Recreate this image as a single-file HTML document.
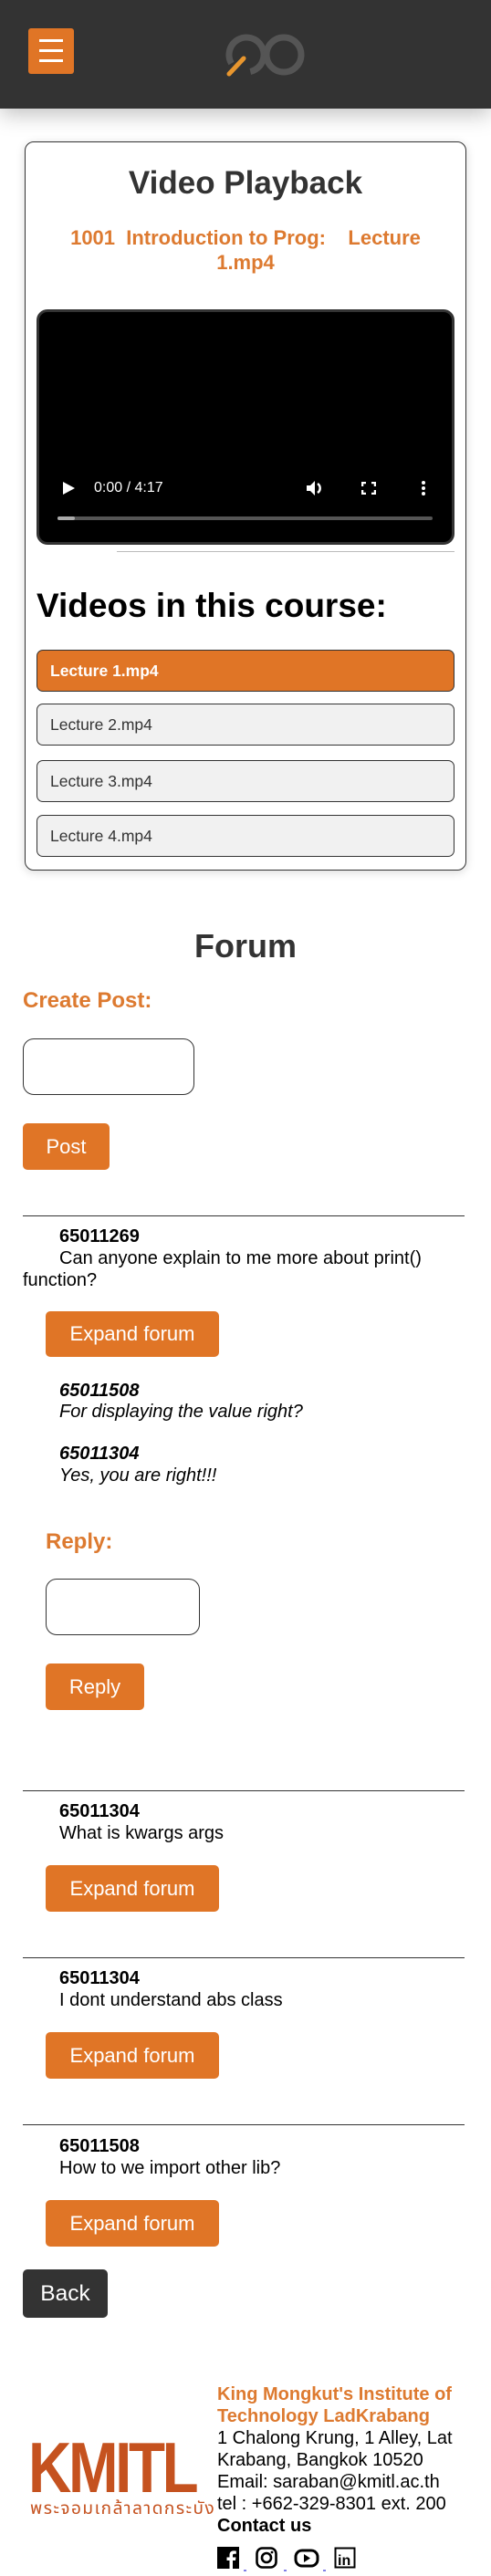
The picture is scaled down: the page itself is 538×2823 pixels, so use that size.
<!DOCTYPE html>
<html><head><meta charset="utf-8"><style>
*{margin:0;padding:0;box-sizing:border-box}
body{width:538px;height:2823px;position:relative;background:#fff;font-family:"Liberation Sans",Arial,sans-serif;overflow:hidden;color:#000}
.a{position:absolute;white-space:nowrap}
.hdr{position:absolute;left:0;top:0;width:538px;height:119px;background:#333;box-shadow:0 6px 22px rgba(0,0,0,.25)}
.btn{position:absolute;background:#e07526;color:#fff;border-radius:5px;text-align:center;font-size:22px}
.hr{position:absolute;left:25px;width:484px;height:1px;background:#333}
.id{font-size:20px;font-weight:bold;line-height:24px}
.tx{font-size:20px;line-height:24px}
.it{font-style:italic}
.item{position:absolute;left:40px;width:458px;height:46px;border:1px solid #333;border-radius:7px;background:#f1f1f1;font-size:17.5px;line-height:44px;padding-left:14px;color:#333}
.inp{position:absolute;border:1px solid #333;border-radius:12px;background:#fff}
.or{color:#dd7a30;font-weight:bold}
</style></head><body>
<div class="hdr"></div>
<div class="a" style="left:31px;top:31px;width:50px;height:50px;background:#e07526;border-radius:3px"></div>
<div class="a" style="left:43px;top:43px;width:26px;height:3px;background:#fff"></div>
<div class="a" style="left:43px;top:54px;width:26px;height:3px;background:#fff"></div>
<div class="a" style="left:43px;top:65px;width:26px;height:3px;background:#fff"></div>
<svg class="a" style="left:0;top:0" width="538" height="119">
<circle cx="270" cy="60" r="19" fill="none" stroke="#555" stroke-width="7" stroke-dasharray="95 25" transform="rotate(150 270 60)"/>
<circle cx="311" cy="60" r="19" fill="none" stroke="#555" stroke-width="7"/>
<line x1="251" y1="81" x2="267" y2="64" stroke="#e8962e" stroke-width="5" stroke-linecap="round"/>
</svg>

<div class="a" style="left:27px;top:155px;width:484px;height:799px;border:1px solid #333;border-radius:10px;box-shadow:0 2px 10px rgba(0,0,0,.15)"></div>
<div class="a" style="left:27px;top:180px;width:484px;text-align:center;font-size:35px;font-weight:bold;color:#333;line-height:42px">Video Playback</div>
<div class="a or" style="left:27px;top:247px;width:484px;text-align:center;font-size:22px;line-height:27px">1001&nbsp; Introduction to Prog: &nbsp;&nbsp; Lecture<br>1.mp4</div>
<div class="a" style="left:40px;top:339px;width:458px;height:258px;background:#000;border:3px solid #333;border-radius:12px"></div>
<svg class="a" style="left:69px;top:528px" width="13" height="14"><path d="M0 0L13 7L0 14Z" fill="#fff"/></svg>
<div class="a" style="left:103px;top:526px;color:#fff;font-size:16px;line-height:18px">0:00 / 4:17</div>
<svg class="a" style="left:335px;top:525px" width="20" height="20"><path d="M1 7h4l5-5v16l-5-5H1z" fill="#fff"/><path d="M13 5a6 6 0 0 1 0 10" fill="none" stroke="#fff" stroke-width="2.5"/></svg>
<svg class="a" style="left:396px;top:528px" width="16" height="14" fill="none" stroke="#fff" stroke-width="2.5"><path d="M1 5V1h4M11 1h4v4M15 9v4h-4M5 13H1V9"/></svg>
<div class="a" style="left:462px;top:527px;width:4px;height:4px;background:#fff;border-radius:2px"></div>
<div class="a" style="left:462px;top:533px;width:4px;height:4px;background:#fff;border-radius:2px"></div>
<div class="a" style="left:462px;top:539px;width:4px;height:4px;background:#fff;border-radius:2px"></div>
<div class="a" style="left:63px;top:566px;width:411px;height:4px;background:#555;border-radius:2px"></div>
<div class="a" style="left:63px;top:566px;width:19px;height:4px;background:#aaa;border-radius:2px"></div>
<div class="a" style="left:128px;top:604px;width:370px;height:1px;background:#bbb"></div>
<div class="a" style="left:40px;top:642px;font-size:37px;font-weight:bold;line-height:44px">Videos in this course:</div>
<div class="item" style="top:712px;background:#e07526;color:#fff;font-weight:bold">Lecture 1.mp4</div>
<div class="item" style="top:771px">Lecture 2.mp4</div>
<div class="item" style="top:833px">Lecture 3.mp4</div>
<div class="item" style="top:893px">Lecture 4.mp4</div>

<div class="a" style="left:0;top:1015px;width:538px;text-align:center;font-size:36px;font-weight:bold;color:#333;line-height:44px">Forum</div>
<div class="a or" style="left:25px;top:1082px;font-size:24px;line-height:30px">Create Post:</div>
<div class="inp" style="left:25px;top:1138px;width:188px;height:62px"></div>
<div class="btn" style="left:25px;top:1231px;width:95px;height:51px;line-height:51px">Post</div>

<div class="hr" style="top:1332px"></div>
<div class="a id" style="left:65px;top:1343px">65011269</div>
<div class="a tx" style="left:25px;top:1367px;white-space:normal;width:480px;text-indent:40px">Can anyone explain to me more about print()<br>function?</div>
<div class="btn" style="left:50px;top:1437px;width:190px;height:50px;line-height:50px">Expand forum</div>
<div class="a id it" style="left:65px;top:1512px">65011508</div>
<div class="a tx it" style="left:65px;top:1535px">For displaying the value right?</div>
<div class="a id it" style="left:65px;top:1581px">65011304</div>
<div class="a tx it" style="left:65px;top:1605px">Yes, you are right!!!</div>
<div class="a or" style="left:50px;top:1675px;font-size:24px;line-height:30px">Reply:</div>
<div class="inp" style="left:50px;top:1730px;width:169px;height:62px"></div>
<div class="btn" style="left:50px;top:1823px;width:108px;height:51px;line-height:51px">Reply</div>

<div class="hr" style="top:1962px"></div>
<div class="a id" style="left:65px;top:1973px">65011304</div>
<div class="a tx" style="left:65px;top:1997px">What is kwargs args</div>
<div class="btn" style="left:50px;top:2044px;width:190px;height:51px;line-height:51px">Expand forum</div>

<div class="hr" style="top:2145px"></div>
<div class="a id" style="left:65px;top:2156px">65011304</div>
<div class="a tx" style="left:65px;top:2180px">I dont understand abs class</div>
<div class="btn" style="left:50px;top:2227px;width:190px;height:51px;line-height:51px">Expand forum</div>

<div class="hr" style="top:2328px"></div>
<div class="a id" style="left:65px;top:2340px">65011508</div>
<div class="a tx" style="left:65px;top:2364px">How to we import other lib?</div>
<div class="btn" style="left:50px;top:2411px;width:190px;height:51px;line-height:51px">Expand forum</div>

<div class="btn" style="left:25px;top:2487px;width:93px;height:53px;line-height:53px;background:#333;font-size:24.5px">Back</div>

<div class="a" style="left:31px;top:2662px;font-size:78px;font-weight:bold;color:#c5521f;line-height:84px;letter-spacing:-4px;transform:scaleX(0.84);transform-origin:0 0">KMITL</div>
<div class="a" style="left:33px;top:2738px;width:187px;font-size:19px;letter-spacing:1.5px;color:#c5521f;line-height:24px;text-align:center;font-family:'Liberation Sans','Noto Sans Thai','DejaVu Sans',sans-serif">พระจอมเกล้าลาดกระบัง</div>
<div class="a" style="left:238px;top:2612px;font-size:20px;line-height:24px">
<span class="or">King Mongkut's Institute of<br>Technology LadKrabang</span><br>
1 Chalong Krung, 1 Alley, Lat<br>Krabang, Bangkok 10520<br>Email: saraban@kmitl.ac.th<br>tel : +662-329-8301 ext. 200<br><b>Contact us</b></div>
<svg class="a" style="left:238px;top:2790px" width="160" height="28">
<rect x="0" y="1" width="24" height="24" fill="#000"/><path d="M17 25V16h3l.5-3.5H17v-2c0-1 .3-1.7 1.8-1.7h2V5.6c-.4 0-1.5-.2-2.8-.2-2.8 0-4.5 1.6-4.5 4.6v2.5h-3V16h3v9z" fill="#fff"/>
<rect x="43.5" y="2.5" width="21" height="21" rx="6" fill="none" stroke="#000" stroke-width="2.6"/><circle cx="54" cy="13" r="5" fill="none" stroke="#000" stroke-width="2.6"/><circle cx="60" cy="7" r="1.4" fill="#000"/>
<rect x="86" y="5" width="24" height="17" rx="7" fill="none" stroke="#000" stroke-width="3"/><path d="M95 9l7 4.5-7 4.5z" fill="#000"/>
<rect x="129.5" y="2.5" width="21" height="21" fill="none" stroke="#000" stroke-width="2"/><text x="132" y="21" font-family="Liberation Sans" font-weight="bold" font-size="16" fill="#000">in</text>
<line x1="29" y1="27" x2="32" y2="27" stroke="#00c" stroke-width="1"/><line x1="73" y1="27" x2="76" y2="27" stroke="#00c"/><line x1="116" y1="27" x2="119" y2="27" stroke="#00c"/>
</svg>
</body></html>
